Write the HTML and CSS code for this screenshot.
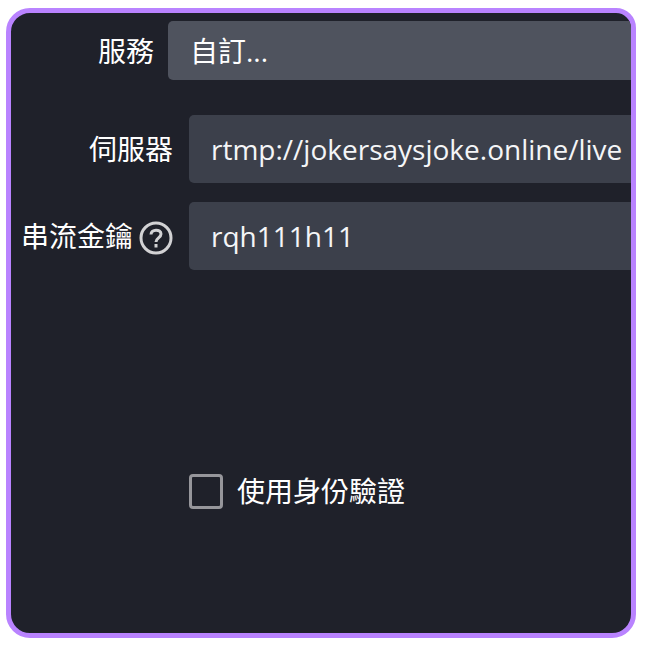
FILE: index.html
```html
<!DOCTYPE html>
<html lang="zh-Hant">
<head>
<meta charset="utf-8">
<meta name="viewport" content="width=device-width, initial-scale=1">
<title>串流</title>
<link rel="stylesheet" href="styles.css">
</head>
<body>
<form class="panel">
  <div class="row row-service">
    <label class="label" for="service">服務</label>
    <select class="field field-select" id="service"><option>自訂...</option></select>
  </div>
  <div class="row row-server">
    <label class="label" for="server">伺服器</label>
    <input class="field" id="server" type="text" value="rtmp://jokersaysjoke.online/live">
  </div>
  <div class="row row-key">
    <div class="label label-help">
      <label for="key">串流金鑰</label>
      <svg class="help" viewBox="0 0 34 34" aria-hidden="true">
        <circle cx="17" cy="17" r="15"/>
        <path d="M12 13.500C12 7.800 22 7.800 22 13c0 4-5 3.800-5 8"/>
        <path d="M17 23v3.500"/>
      </svg>
    </div>
    <input class="field" id="key" type="text" value="rqh111h11">
  </div>
  <div class="auth">
    <input class="check" id="auth" type="checkbox">
    <label for="auth">使用身份驗證</label>
  </div>
</form>
</body>
</html>
```
FILE: styles.css
```css
* {
  box-sizing: border-box;
}

body {
  margin: 0;
  padding: 8px 10px 8px 6px;
  min-height: 100vh;
  display: flex;
  background: #fff;
  color: #fff;
  font: 28px/40px "Open Sans", "Noto Sans CJK TC", sans-serif;
}

.panel {
  flex: 1;
  min-width: 0;
  padding-top: 8px;
  overflow: hidden;
  border: 5px solid #b983ff;
  border-radius: 24px 20px 24px 24px;
  background: #1f212a;
}

.row {
  display: grid;
  grid-template-columns: 178px minmax(0, 1fr);
  align-items: center;
}

.row-service {
  grid-template-columns: 157px minmax(0, 1fr);
  margin-bottom: 35px;
}

.row-server {
  margin-bottom: 19px;
}

.label {
  padding-right: 16px;
  text-align: right;
  white-space: nowrap;
}

.row-service .label {
  padding-right: 14px;
}

.label-help {
  display: flex;
  align-items: center;
  justify-content: flex-end;
  gap: 6px;
}

.help {
  width: 34px;
  height: 34px;
  margin-top: 4px;
  flex: none;
  fill: none;
  stroke: #d2d2d4;
  stroke-width: 3;
}

.field {
  width: 100%;
  min-width: 0;
  height: 68px;
  margin: 0;
  padding: 0 0 0 22px;
  border: 0;
  border-radius: 5px 0 0 5px;
  outline: 0;
  background: #3c404b;
  color: #f4f5f7;
  font: inherit;
}

.field-select {
  height: 59px;
  appearance: none;
  background: #4f535e;
  color: #fff;
}

.auth {
  display: flex;
  align-items: center;
  gap: 14px;
  margin: 201px 0 0 178px;
}

.check {
  width: 34px;
  height: 35px;
  flex: none;
  margin: 0;
  appearance: none;
  border: 3px solid #96969b;
  border-radius: 4px;
}

.check:checked {
  background: #b983ff;
}
```
